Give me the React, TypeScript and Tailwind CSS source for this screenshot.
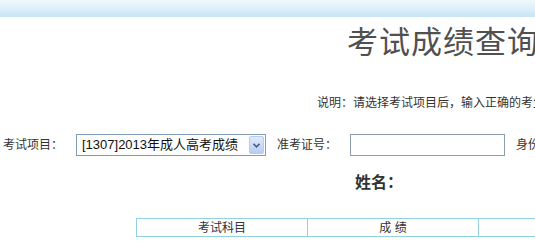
const cjk = "font-['Liberation_Sans','Noto_Sans_CJK_SC',sans-serif]";

function FakeSelect({ value }: { value: string }) {
  return (
    <div className="flex shrink-0 items-center w-[190px] h-[22px] border border-[#7f9db9] bg-white pl-[5px] pr-[1px]">
      <span className="flex-1 text-[13px] leading-[20px] text-[#111] whitespace-nowrap">{value}</span>
      <div className="flex shrink-0 items-center justify-center w-[15px] h-[18px] rounded-[2px] border border-[#b7cbef] bg-gradient-to-b from-[#e1ebfc] to-[#b6cdf4]">
        <svg width="7" height="5" viewBox="0 0 7 5">
          <path d="M0.5 0.8 L3.5 3.8 L6.5 0.8" fill="none" stroke="#4b5f86" strokeWidth="1.6" />
        </svg>
      </div>
    </div>
  );
}

export default function App() {
  return (
    <div className={`w-[535px] h-[249px] overflow-hidden bg-white ${cjk}`}>
      <div className="w-[900px]">
        {/* top band */}
        <div className="h-[17px] bg-gradient-to-b from-[#f2f9fd] to-[#c7e4f6]" />

        {/* title */}
        <div className="mt-[10px] pl-[347px] text-[31px] leading-[32px] tracking-[1px] text-[#505050] whitespace-nowrap">
          考试成绩查询
        </div>

        {/* notice */}
        <div className="mt-[36px] pl-[317px] text-[12px] leading-[16px] text-[#333] whitespace-nowrap">
          说明：请选择考试项目后，输入正确的考生信息，点击查询按钮。
        </div>

        {/* form row */}
        <div className="mt-[23px] flex items-center h-[22px] pl-[3px] text-[12px] text-[#333] whitespace-nowrap">
          <span className="shrink-0 w-[73px]">考试项目：</span>
          <FakeSelect value="[1307]2013年成人高考成绩" />
          <span className="shrink-0 ml-[11px] w-[73px]">准考证号：</span>
          <div className="shrink-0 w-[155px] h-[22px] border border-[#8a9caf] bg-white" />
          <span className="shrink-0 ml-[11px]">身份证号：</span>
        </div>

        {/* name */}
        <div className="mt-[17px] pl-[355px] text-[16px] leading-[20px] font-bold text-[#333] whitespace-nowrap">
          姓名：
        </div>

        {/* result table */}
        <div className="mt-[25px] pl-[136px]">
          <table className="table-fixed w-[513px] border-collapse text-[12px] text-[#333]">
            <tbody>
              <tr className="h-[18px]">
                <td className="w-[171px] border border-[#93d2e4] text-center leading-[16px] p-0">考试科目</td>
                <td className="w-[171px] border border-[#93d2e4] text-center leading-[16px] p-0">成 绩</td>
                <td className="w-[171px] border border-[#93d2e4] text-center leading-[16px] p-0">备 注</td>
              </tr>
            </tbody>
          </table>
        </div>
      </div>
    </div>
  );
}
